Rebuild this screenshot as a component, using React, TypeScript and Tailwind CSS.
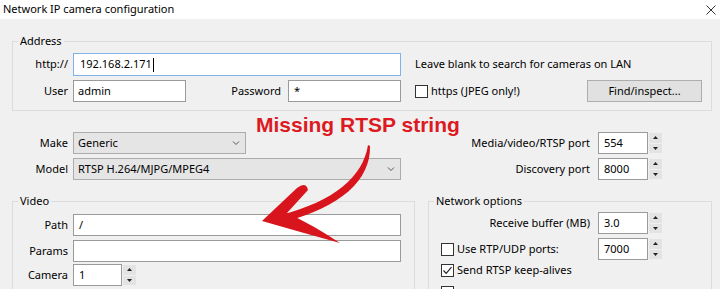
import React from 'react';

const Caret: React.FC = () => (
  <svg width="10" height="10" viewBox="0 0 10 10" className="text-[#555]">
    <path d="M2 3.5 L5 6.5 L8 3.5" fill="none" stroke="currentColor" strokeWidth="1" />
  </svg>
);

const Checkbox: React.FC<{ checked?: boolean }> = ({ checked }) => (
  <span className="flex h-[13px] w-[13px] shrink-0 items-center justify-center border border-[#333] bg-white">
    {checked && (
      <svg width="11" height="11" viewBox="0 0 11 11">
        <path d="M1.5 5.5 L4.2 8.3 L9.5 2.2" fill="none" stroke="#222" strokeWidth="1.2" />
      </svg>
    )}
  </span>
);

const Spin: React.FC<{ value: string; w?: string }> = ({ value, w = 'w-[50px]' }) => (
  <div className="flex h-[22px] shrink-0">
    <div className={`${w} flex h-full items-center border border-[#9a9a9a] bg-white pl-[5px]`}>{value}</div>
    <div className="flex h-full w-[14px] flex-col gap-[1px] bg-[#f0f0f0] py-[1px] pl-[1px]">
      <div className="flex flex-1 items-center justify-center bg-[#e3e3e3]">
        <svg width="5" height="3" viewBox="0 0 5 3"><path d="M0 3 L2.5 0 L5 3 Z" fill="#222" /></svg>
      </div>
      <div className="flex flex-1 items-center justify-center bg-[#e3e3e3]">
        <svg width="5" height="3" viewBox="0 0 5 3"><path d="M0 0 L2.5 3 L5 0 Z" fill="#222" /></svg>
      </div>
    </div>
  </div>
);

const Group: React.FC<{ title: string; className?: string; children: React.ReactNode }> = ({ title, className, children }) => (
  <div className={`relative border border-[#dcdcdc] ${className ?? ''}`}>
    <span className="absolute -top-[9px] left-[5px] bg-[#f0f0f0] px-[2px] leading-[16px]">{title}</span>
    {children}
  </div>
);

export default function App() {
  return (
    <div className="relative h-[289px] w-[720px] overflow-hidden bg-[#f0f0f0] font-['Noto_Sans',sans-serif] text-[11px] text-black">
      {/* Title bar */}
      <div className="flex h-[19px] items-center justify-between bg-white pl-[3px] pr-[4px]">
        <span>Network IP camera configuration</span>
        <svg width="10" height="10" viewBox="0 0 10 10">
          <path d="M0.5 0.5 L9.5 9.5 M9.5 0.5 L0.5 9.5" stroke="#333" strokeWidth="1" />
        </svg>
      </div>

      <div className="pl-[12px] pr-[8px]">
        {/* Address */}
        <Group title="Address" className="mt-[22px] pb-[8px] pt-[11px]">
          <div className="flex h-[23px] items-center">
            <span className="w-[55px] text-right">http://</span>
            <div className="ml-[5px] flex h-full w-[328px] items-center border border-[#7eb4ea] bg-white pl-[6px]">
              192.168.2.171<span className="ml-[1px] h-[14px] w-[1px] bg-black" />
            </div>
            <span className="ml-[14px]">Leave blank to search for cameras on LAN</span>
          </div>
          <div className="mt-[4px] flex h-[22px] items-center">
            <span className="w-[55px] text-right">User</span>
            <div className="ml-[5px] flex h-full w-[113px] items-center border border-[#9a9a9a] bg-white pl-[4px]">admin</div>
            <span className="w-[95px] text-right">Password</span>
            <div className="ml-[7px] flex h-full w-[113px] items-center border border-[#9a9a9a] bg-white pl-[5px]">*</div>
            <div className="ml-[14px] flex items-center gap-[3px]">
              <Checkbox />
              <span>https (JPEG only!)</span>
            </div>
            <button className="ml-auto mr-[9px] flex h-[22px] w-[115px] items-center justify-center border border-[#adadad] bg-[#e1e1e1]">
              Find/inspect...
            </button>
          </div>
        </Group>

        {/* Make / Model */}
        <div className="mt-[21px] flex h-[22px] items-center">
          <span className="w-[56px] text-right">Make</span>
          <div className="ml-[5px] flex h-full w-[173px] items-center justify-between border border-[#acacac] bg-[#e5e5e5] pl-[4px] pr-[4px]">
            Generic <Caret />
          </div>
          <span className="ml-auto">Media/video/RTSP port</span>
          <div className="ml-[8px] mr-[50px]">
            <Spin value="554" />
          </div>
        </div>
        <div className="mt-[4px] flex h-[22px] items-center">
          <span className="w-[56px] text-right">Model</span>
          <div className="ml-[5px] flex h-full w-[328px] items-center justify-between border border-[#acacac] bg-[#e5e5e5] pl-[4px] pr-[4px]">
            RTSP H.264/MJPG/MPEG4 <Caret />
          </div>
          <span className="ml-auto">Discovery port</span>
          <div className="ml-[8px] mr-[50px]">
            <Spin value="8000" />
          </div>
        </div>

        {/* Video + Network options */}
        <div className="mt-[21px] flex gap-[13px]">
          <Group title="Video" className="h-[110px] w-[403px] pt-[12px]">
            <div className="flex h-[22px] items-center">
              <span className="w-[55px] text-right">Path</span>
              <div className="ml-[5px] flex h-full w-[328px] items-center border border-[#9a9a9a] bg-white pl-[5px]">/</div>
            </div>
            <div className="mt-[4px] flex h-[22px] items-center">
              <span className="w-[55px] text-right">Params</span>
              <div className="ml-[5px] h-full w-[328px] border border-[#9a9a9a] bg-white" />
            </div>
            <div className="mt-[2px] flex h-[22px] items-center">
              <span className="w-[55px] text-right">Camera</span>
              <div className="ml-[5px]">
                <Spin value="1" w="w-[49px]" />
              </div>
            </div>
          </Group>

          <Group title="Network options" className="h-[110px] flex-1 pr-[49px] pt-[10px]">
            <div className="flex h-[22px] items-center justify-end">
              <span>Receive buffer (MB)</span>
              <div className="ml-[8px]">
                <Spin value="3.0" />
              </div>
            </div>
            <div className="mt-[4px] flex h-[22px] items-center pl-[12px]">
              <Checkbox />
              <span className="ml-[3px]">Use RTP/UDP ports:</span>
              <div className="ml-auto">
                <Spin value="7000" />
              </div>
            </div>
            <div className="mt-[2px] flex h-[16px] items-center pl-[12px]">
              <Checkbox checked />
              <span className="ml-[3px]">Send RTSP keep-alives</span>
            </div>
            <div className="mt-[6px] flex h-[16px] items-center pl-[12px]">
              <Checkbox />
            </div>
          </Group>
        </div>
      </div>

      {/* Red annotation overlay */}
      <span className="absolute left-[256px] top-[113px] font-['Liberation_Sans',Arial,sans-serif] text-[21px] font-bold leading-[24px] text-[#dc1a1f]">
        Missing RTSP string
      </span>
      <svg className="pointer-events-none absolute left-0 top-0" width="720" height="289" viewBox="0 0 720 289">
        <path
          d="M368 145 C 363 177 334 201 281 215 L 284 222 C 341 207 371 180 370 146 Z"
          fill="#d8141c"
        />
        <path
          d="M262 221 L 297 188 Q 306 181 308 190 L 287 213 Q 313 225 340 243 Q 300 232 262 221 Z"
          fill="#d8141c"
        />
      </svg>
    </div>
  );
}
